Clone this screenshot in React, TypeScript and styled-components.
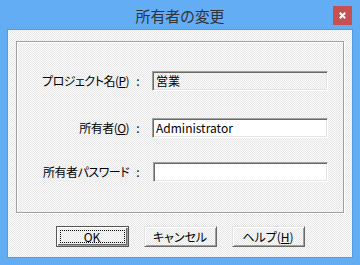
import React from "react";
import styled, { createGlobalStyle } from "styled-components";

const Global = createGlobalStyle`
  html, body { margin: 0; padding: 0; background: #fff; }
  body { font-family: "Noto Sans CJK JP", "Noto Sans", sans-serif; }
  * { box-sizing: border-box; }
`;

const checker = `
  background-color: #f0f0f0;
  background-image: conic-gradient(#fbfbfb 25%, #e6e6e6 0 50%, #fbfbfb 0 75%, #e6e6e6 0);
  background-size: 2px 2px;
`;

const Window = styled.div`
  width: 360px;
  height: 265px;
  background: #63adf5;
  padding: 0 7px 7px 7px;
  display: flex;
  flex-direction: column;
`;

const TitleBar = styled.div`
  height: 29px;
  display: grid;
  grid-template-columns: 1fr auto 1fr;
  align-items: start;
`;

const Title = styled.div`
  grid-column: 2;
  font-family: "Noto Sans CJK JP", sans-serif;
  font-size: 15px;
  line-height: 20px;
  margin-top: 6px;
  color: #333;
  letter-spacing: -0.2px;
`;

const Close = styled.div`
  grid-column: 3;
  justify-self: end;
  margin-top: 6px;
  margin-right: 1px;
  width: 19px;
  height: 19px;
  background: #c75050;
  display: flex;
  align-items: center;
  justify-content: center;
`;

const Client = styled.div`
  flex: 1;
  border: 1px solid #519ce4;
  ${checker}
  padding: 11px 8px 0 8px;
  display: flex;
  flex-direction: column;
`;

const Group = styled.div`
  height: 172px;
  border: 1px solid #a0a0a0;
  box-shadow: 1px 1px 0 #fff, inset 1px 1px 0 #fff;
  padding-top: 29px;
  display: flex;
  flex-direction: column;
`;

const Row = styled.div<{ $mt: number }>`
  display: grid;
  grid-template-columns: 122px 176px;
  column-gap: 13px;
  align-items: center;
  margin-top: ${(p) => p.$mt}px;
  height: 20px;
`;

const Label = styled.div`
  font-size: 12px;
  font-feature-settings: "palt";
  letter-spacing: -0.5px;
  color: #000;
  text-align: right;
  white-space: nowrap;
  line-height: 20px;
`;

const Colon = styled.span`
  margin-left: 7px;
`;

const Field = styled.div<{ $readOnly?: boolean; $shift?: number }>`
  height: 20px;
  margin-left: ${(p) => p.$shift ?? 0}px;
  background: ${(p) => (p.$readOnly ? "transparent" : "#fff")};
  border-top: 1px solid #a0a0a0;
  border-left: 1px solid #a0a0a0;
  border-bottom: 1px solid #fff;
  border-right: 1px solid #fff;
  box-shadow: inset 1px 1px 0 #696969, inset -1px -1px 0 #e3e3e3;
  font-size: 12px;
  line-height: 18px;
  padding-left: 3px;
  color: #000;
`;

const ButtonRow = styled.div`
  margin-top: 13px;
  display: flex;
  justify-content: center;
  gap: 15px;
`;

const Button = styled.div<{ $default?: boolean }>`
  width: 73px;
  height: 21px;
  ${checker}
  border: 1px solid ${(p) => (p.$default ? "#555" : "transparent")};
  border-color: ${(p) => (p.$default ? "#555" : "#e3e3e3 #696969 #696969 #e3e3e3")};
  box-shadow: inset 1px 1px 0 #fff, inset -1px -1px 0 #a0a0a0
    ${(p) => (p.$default ? ", inset -2px -2px 0 #696969" : "")};
  font-size: 12px;
  font-feature-settings: "palt";
  color: #000;
  display: flex;
  align-items: center;
  justify-content: center;
  line-height: 1;
  padding: 3px;
`;

const Focus = styled.div`
  width: 100%;
  height: 100%;
  border: 1px dotted #000;
  display: flex;
  align-items: center;
  justify-content: center;
`;

export default function App() {
  return (
    <>
      <Global />
      <Window>
        <TitleBar>
          <Title>所有者の変更</Title>
          <Close>
            <svg width="7" height="7" viewBox="0 0 7 7">
              <path d="M0.8 0.8 L6.2 6.2 M6.2 0.8 L0.8 6.2" stroke="#fff" strokeWidth="2" />
            </svg>
          </Close>
        </TitleBar>
        <Client>
          <Group>
            <Row $mt={0}>
              <Label>
                プロジェクト名(<u>P</u>)<Colon>:</Colon>
              </Label>
              <Field $readOnly>営業</Field>
            </Row>
            <Row $mt={27}>
              <Label>
                所有者(<u>O</u>)<Colon>:</Colon>
              </Label>
              <Field>Administrator</Field>
            </Row>
            <Row $mt={24}>
              <Label>
                所有者パスワード<Colon>:</Colon>
              </Label>
              <Field $shift={1}></Field>
            </Row>
          </Group>
          <ButtonRow>
            <Button $default>
              <Focus>OK</Focus>
            </Button>
            <Button>キャンセル</Button>
            <Button>
              ヘルプ(<u>H</u>)
            </Button>
          </ButtonRow>
        </Client>
      </Window>
    </>
  );
}
